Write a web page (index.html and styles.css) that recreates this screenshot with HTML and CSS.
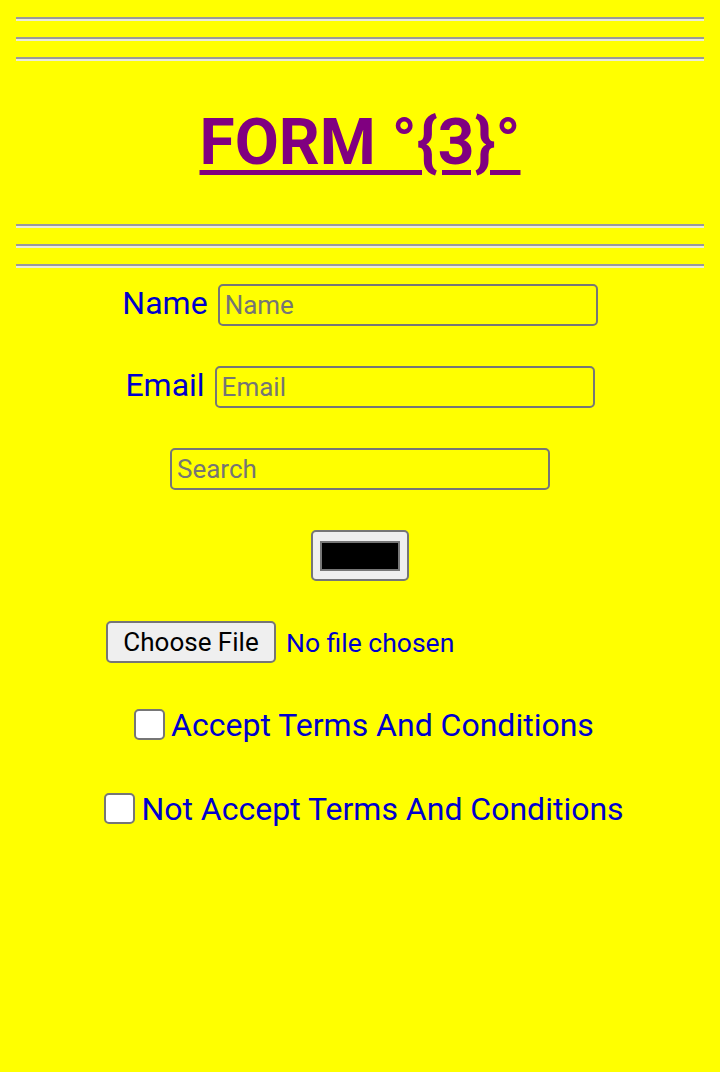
FILE: index.html
```html
<!DOCTYPE html>
<html>
<head>
<meta charset="utf-8">
<link rel="stylesheet" href="styles.css">
</head>
<body>
<hr class="rule">
<hr class="rule">
<hr class="rule">
<h1 class="title"><span class="title-link">FORM °{3}°</span></h1>
<hr class="rule">
<hr class="rule">
<hr class="rule">
<form class="form">
  <div class="row">
    <label class="label" for="name">Name</label>
    <input class="field" id="name" type="text" placeholder="Name">
  </div>
  <div class="row">
    <label class="label" for="email">Email</label>
    <input class="field" id="email" type="email" placeholder="Email">
  </div>
  <div class="row">
    <input class="field" type="search" placeholder="Search">
  </div>
  <div class="row">
    <span class="color-btn"><span class="color-swatch"></span></span>
  </div>
  <div class="row file-row">
    <span class="file-btn">Choose File</span>
    <span class="file-text">No file chosen</span>
  </div>
  <div class="row check-row first-check">
    <span class="check"></span>
    <span class="check-text">Accept Terms And Conditions</span>
  </div>
  <div class="row check-row second-check">
    <span class="check"></span>
    <span class="check-text">Not Accept Terms And Conditions</span>
  </div>
</form>
</body>
</html>
```
FILE: styles.css
```css
html, body {
  background: #ffff00;
}
body {
  margin: 0 16px 16px;
  padding-top: 1px;
  font-family: Roboto, "Noto Sans", sans-serif;
}
.rule {
  margin: 16px 0;
  height: 0;
  border: 0;
  border-top: 2px solid #9a9a9a;
  border-bottom: 2px solid #ececd8;
}
.title {
  margin: 44px 0 43px;
  text-align: center;
  font-size: 64px;
  font-weight: 700;
  line-height: 76px;
  color: #800080;
}
.title-link {
  text-decoration: underline;
  text-decoration-thickness: 5px;
  text-underline-offset: 6px;
}
.form {
  display: flex;
  flex-direction: column;
  align-items: center;
  gap: 40px;
  margin-top: 15px;
}
.row {
  display: flex;
  align-items: baseline;
  justify-content: center;
  gap: 10px;
}
.label {
  font-size: 32px;
  color: #0000cd;
}
.field {
  box-sizing: border-box;
  width: 380px;
  height: 42px;
  margin: 0;
  padding: 2px 5px;
  font-family: Roboto, sans-serif;
  font-size: 26px;
  background: transparent;
  border: 2px solid #767676;
  border-radius: 5px;
  color: #000;
  -webkit-appearance: none;
  appearance: none;
}
.field::placeholder {
  color: #757575;
}
.color-btn {
  box-sizing: border-box;
  display: flex;
  align-items: center;
  justify-content: center;
  width: 98px;
  height: 51px;
  background: #efefef;
  border: 2px solid #767676;
  border-radius: 5px;
}
.color-swatch {
  box-sizing: border-box;
  width: 80px;
  height: 30px;
  background: #000;
  border: 2px solid #777777;
}
.file-row {
  width: 508px;
  justify-content: flex-start;
  gap: 10px;
  align-items: center;
}
.file-btn {
  box-sizing: border-box;
  width: 170px;
  height: 42px;
  display: flex;
  align-items: center;
  justify-content: center;
  background: #efefef;
  border: 2px solid #767676;
  border-radius: 5px;
  font-size: 26px;
  color: #000;
}
.file-text {
  font-size: 26.5px;
  color: #0000cd;
}
.first-check {
  margin-top: 3px;
}
.second-check {
  margin-top: 6px;
}
.check-row {
  gap: 0;
  align-items: flex-end;
}
.check {
  box-sizing: border-box;
  width: 31px;
  height: 31px;
  background: #fff;
  border: 2px solid #767676;
  border-radius: 5px;
  margin: 0 6px 4px 8px;
}
.check-text {
  font-size: 32px;
  line-height: 38px;
  color: #0000cd;
}
```
